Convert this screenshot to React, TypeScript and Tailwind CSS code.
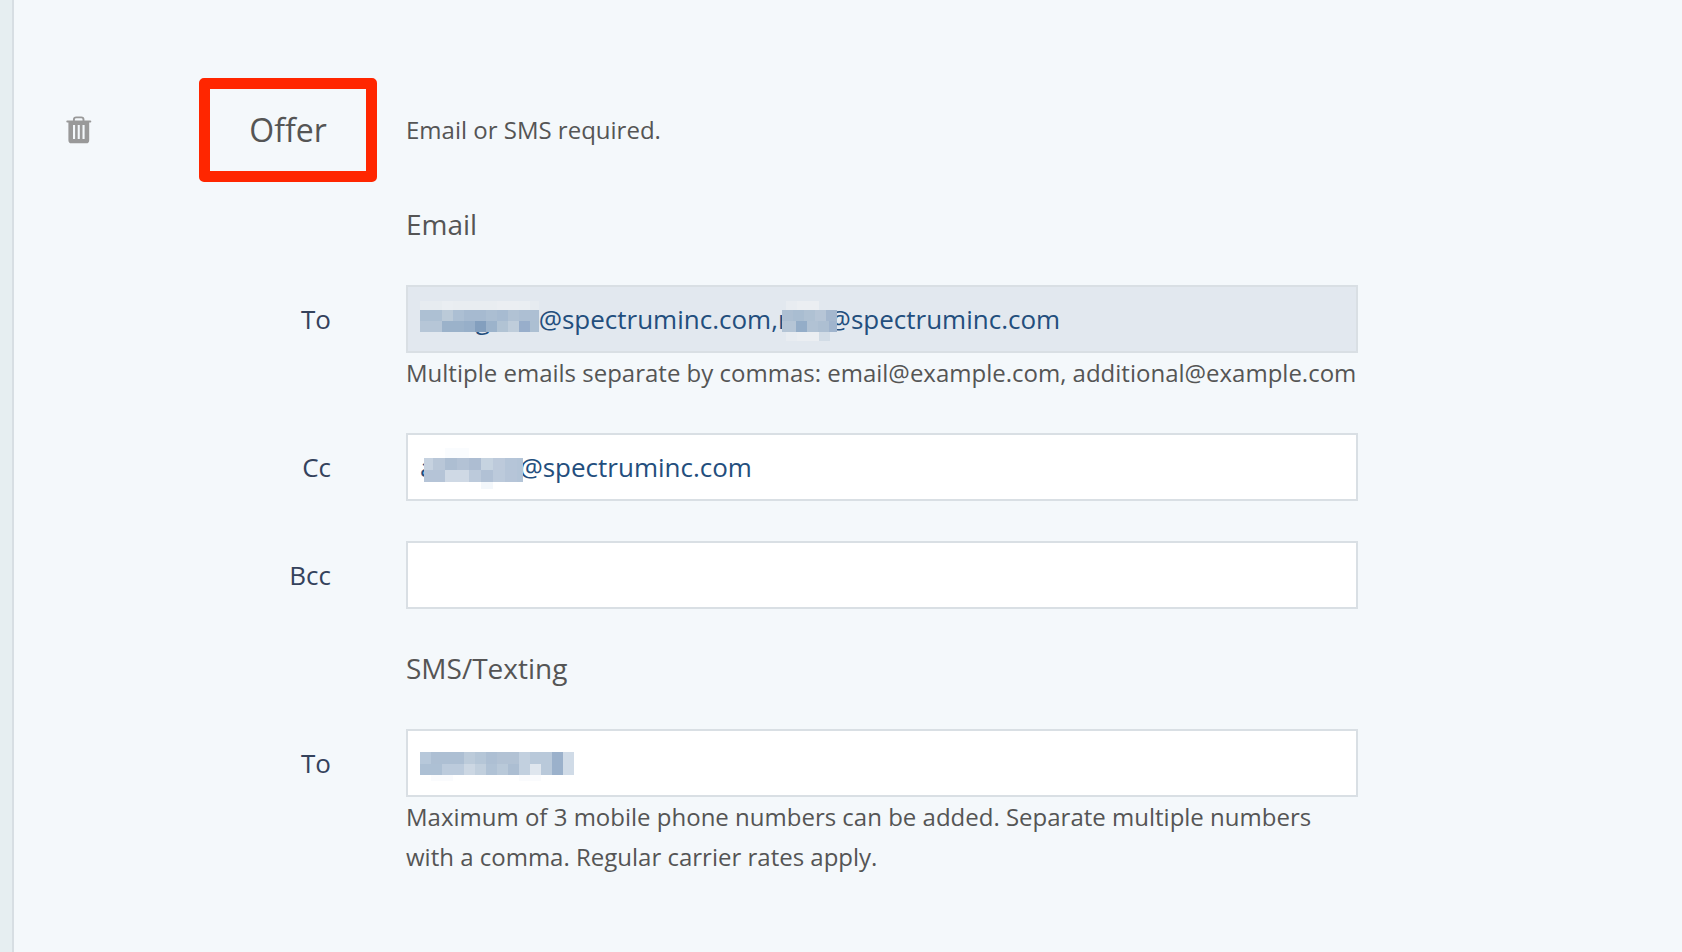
import { useState } from "react";
import type { ReactNode } from "react";

type Cell = [x: number, y: number, w: number, h: number, fill: string];

function row(y: number, h: number, size: number, fills: string[], start = 0): Cell[] {
  return fills.map((fill, i) => [start + i * size, y, size, h, fill]);
}

const toName: Cell[] = [
  ...row(0, 9, 11, ["#e7ecf0", "#e7ecf0", "#eaeef2", "#e9edf1", "#e9edf1", "#e9edf1", "#e9edf1", "#ebeef2", "#ebeef2", "#eaeef2", "#e6ebf0"]),
  ...row(9, 11, 11, ["#adc0d3", "#adc0d3", "#bbcad8", "#acbfd3", "#a6bad0", "#a6bad0", "#abbed2", "#a7bbd1", "#b1c2d4", "#adbfd3", "#adbfd3"]),
  ...row(20, 11, 11, ["#b6c6d7", "#b6c6d7", "#9bb2ca", "#9bb2ca", "#97afc9", "#839fbe", "#9cb3cb", "#b1c3d4", "#bfcddb", "#98aecb", "#acbfd2"]),
];

const toSecond: Cell[] = [
  ...row(0, 9, 11, ["#e8ecf1", "#ebeef2", "#ebeef2"], 4),
  ...row(9, 11, 11, ["#adbfd2", "#a9bdd1", "#afc1d3", "#b6c5d6", "#a4b7ce"]),
  ...row(20, 11, 11, ["#b5c5d6", "#94adc8", "#b1c2d4", "#adbfd2", "#a0b4cd"], 3).map(
    ([x, y, w, h, f]): Cell => [x === 3 ? 0 : x, y, x === 3 ? 14 : x === 47 ? 8 : w, h, f],
  ),
  ...row(31, 9, 11, ["#e8ecf1", "#ebeef2", "#ebeef2", "#d2dce6"], 4),
];

const ccName: Cell[] = [
  ...row(0, 10, 12, ["#fafcfe", "#fafcfe"], 21),
  [0, 10, 9, 12, "#c6d2e0"],
  ...row(10, 12, 12, ["#b9c7d8", "#adbed2", "#b3c2d5", "#adbdd2", "#c6d3e0", "#bdcadb", "#b5c5d8"], 9),
  [93, 10, 6, 12, "#b3c4d7"],
  [0, 22, 21, 12, "#b5c4d7"],
  ...row(22, 12, 12, ["#cfd9e5", "#cfd9e5", "#bccadb", "#b1c1d5", "#bccadb", "#b6c5d8"], 21),
  [93, 22, 6, 12, "#b3c4d7"],
  [57, 34, 12, 7, "#f3f7fb"],
];

const smsNumber: Cell[] = [
  ...row(0, 12, 11, ["#b7c8da", "#adbfd3", "#adbfd3", "#adbfd3", "#bccbda", "#b5c6d7", "#adbfd3", "#b2c2d4", "#b2c2d4", "#c2d0df", "#b9c9da", "#b9c9da", "#9bb1cb", "#d0dbe7"]),
  ...row(12, 11, 11, ["#adc0d4", "#adc0d4", "#bccbdc", "#bccbdc", "#ccd7e3", "#c1cfdd", "#b0c2d5", "#b9c9d9", "#acbed2", "#c2d0df", "#dfe6ee", "#b9c9da", "#9bb1cb", "#d0dbe7"]),
  ...row(23, 6, 11, ["#fafbfd", "#fafbfd"], 11),
  ...row(23, 6, 11, ["#fafbfd", "#fafbfd"], 99),
];

function Mosaic({ cells, className }: { cells: Cell[]; className: string }) {
  return (
    <svg aria-hidden="true" shapeRendering="crispEdges" className={"pointer-events-none absolute overflow-hidden " + className}>
      {cells.map(([x, y, w, h, fill], i) => (
        <rect key={i} x={x} y={y} width={w} height={h} fill={fill} />
      ))}
    </svg>
  );
}

function TrashIcon() {
  return (
    <svg width="26" height="28" viewBox="0 0 26 28" fill="none" aria-hidden="true">
      <path d="M7.9 5V3.6Q7.9 1.4 10.2 1.4H15.2Q17.5 1.4 17.5 3.6V5" stroke="#999" strokeWidth="1.9" />
      <rect x="0.3" y="4.4" width="25" height="2.2" rx="1" fill="#999" />
      <path
        fillRule="evenodd"
        fill="#999"
        d="M2.4 5.5H23.2V24.2Q23.2 27.3 20.2 27.3H5.4Q2.4 27.3 2.4 24.2ZM7 9V23H9.1V9ZM11.7 9V23H13.8V9ZM16.5 9V23H18.6V9Z"
      />
    </svg>
  );
}

interface FieldProps {
  id: string;
  label: string;
  initial?: string;
  help?: string;
  highlighted?: boolean;
  children?: ReactNode;
}

function Field({ id, label, initial = "", help, highlighted = false, children }: FieldProps) {
  const [value, setValue] = useState(initial);
  return (
    <div className="flex gap-[75px]">
      <label htmlFor={id} className="w-[317px] shrink-0 text-right text-[26px] leading-[68px] text-[#34425c]">
        {label}
      </label>
      <div className="max-w-[952px] min-w-0 flex-1">
        <div className="relative">
          <input
            id={id}
            type="text"
            value={value}
            onChange={(e) => setValue(e.target.value)}
            aria-describedby={help ? id + "-help" : undefined}
            className={
              "block h-[68px] w-full border-2 border-[#d9dfe4] px-3 text-[26px] text-[#234e7d] outline-none " +
              (highlighted ? "bg-[#e2e8ef]" : "bg-white")
            }
          />
          {children}
        </div>
        {help && (
          <p id={id + "-help"} className="text-2xl leading-10">
            {help}
          </p>
        )}
      </div>
    </div>
  );
}

function SectionTitle({ children }: { children: ReactNode }) {
  return <h3 className="mb-[43px] ml-[392px] text-[28px] leading-9">{children}</h3>;
}

export default function App() {
  return (
    <div className="flex min-h-screen bg-[#f4f8fb] font-['Open_Sans',sans-serif] text-[#555]">
      <div className="w-3.5 shrink-0 border-r-2 border-[#d7dee3] bg-[#e6eef1]" />
      <main className="min-w-0 flex-1 pt-[78px] pb-16">
        <header className="flex items-center pl-[52px]">
          <button type="button" aria-label="Delete" className="cursor-pointer">
            <TrashIcon />
          </button>
          <h2 className="ml-[107px] flex h-[104px] w-[178px] items-center justify-center rounded-[5px] border-[11px] border-[#ff2600] text-[32px] leading-10">
            Offer
          </h2>
          <p className="ml-[29px] text-2xl">Email or SMS required.</p>
        </header>

        <form className="mt-6" onSubmit={(e) => e.preventDefault()}>
          <SectionTitle>Email</SectionTitle>
          <div className="mb-[41px] flex flex-col gap-10">
            <Field
              id="email-to"
              label="To"
              highlighted
              initial={"\u2022\u2022\u2022\u2022\u2022\u00a0g\u2022\u2022\u2022\u2022\u2022@spectruminc.com,r\u2022\u2022\u2022\u2022@spectruminc.com"}
              help="Multiple emails separate by commas: email@example.com, additional@example.com"
            >
              <Mosaic cells={toName} className="top-4 left-3.5 h-[31px] w-[119px]" />
              <Mosaic cells={toSecond} className="top-4 left-[376px] h-10 w-[55px]" />
            </Field>
            <Field id="email-cc" label="Cc" initial={"a\u2022\u2022\u2022\u2022\u00a0\u2022\u2022\u2022\u2022@spectruminc.com"}>
              <Mosaic cells={ccName} className="top-[15px] left-[18px] h-[41px] w-[99px]" />
            </Field>
            <Field id="email-bcc" label="Bcc" />
          </div>

          <SectionTitle>SMS/Texting</SectionTitle>
          <Field
            id="sms-to"
            label="To"
            initial={"\u2022\u2022\u2022\u2022\u2022\u2022\u2022\u2022\u2022\u2022"}
            help="Maximum of 3 mobile phone numbers can be added. Separate multiple numbers with a comma. Regular carrier rates apply."
          >
            <Mosaic cells={smsNumber} className="top-[23px] left-3.5 h-[29px] w-[154px]" />
          </Field>
        </form>
      </main>
    </div>
  );
}
